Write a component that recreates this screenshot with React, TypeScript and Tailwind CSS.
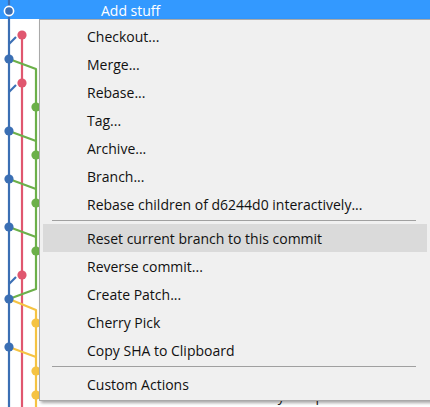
import React from "react";

const BLUE = "#3b6fb4";
const RED = "#e0576f";
const GREEN = "#6cb04a";
const YELLOW = "#f5c343";

function Graph() {
  const r = 4.6;
  return (
    <svg
      className="absolute left-0 top-0"
      width="40"
      height="407"
      viewBox="0 0 40 407"
      fill="none"
    >
      <line x1="9" y1="0" x2="9" y2="407" stroke={BLUE} strokeWidth="2.2" />
      <line x1="22" y1="35" x2="22" y2="407" stroke={RED} strokeWidth="2.2" />
      <polyline
        points="9,59 36,69 36,289 9,299"
        stroke={GREEN}
        strokeWidth="2.2"
        strokeLinejoin="round"
      />
      <line x1="9" y1="131" x2="36" y2="141" stroke={GREEN} strokeWidth="2.2" />
      <line x1="9" y1="179" x2="36" y2="189" stroke={GREEN} strokeWidth="2.2" />
      <line x1="9" y1="227" x2="36" y2="237" stroke={GREEN} strokeWidth="2.2" />
      <polyline
        points="9,299 36,310 36,407"
        stroke={YELLOW}
        strokeWidth="2.2"
        strokeLinejoin="round"
      />
      <line x1="9" y1="347" x2="36" y2="357" stroke={YELLOW} strokeWidth="2.2" />
      <line x1="9" y1="44" x2="16" y2="37" stroke={BLUE} strokeWidth="2.2" />
      <line x1="9" y1="92" x2="16" y2="85" stroke={BLUE} strokeWidth="2.2" />
      <line x1="9" y1="284" x2="16" y2="277" stroke={BLUE} strokeWidth="2.2" />
      <circle cx="9" cy="11" r="4.6" fill={BLUE} stroke="#ffffff" strokeWidth="1.6" />
      <circle cx="22" cy="35" r={r} fill={RED} />
      <circle cx="22" cy="83" r={r} fill={RED} />
      <circle cx="22" cy="275" r={r} fill={RED} />
      {[59, 131, 179, 227, 299, 347].map((y) => (
        <circle key={"b" + y} cx="9" cy={y} r={r} fill={BLUE} />
      ))}
      {[107, 155, 203, 251].map((y) => (
        <circle key={"g" + y} cx="36" cy={y} r={r} fill={GREEN} />
      ))}
      {[323, 371, 395].map((y) => (
        <circle key={"y" + y} cx="36" cy={y} r={r} fill={YELLOW} />
      ))}
    </svg>
  );
}

type Entry = { label: string } | { sep: true };

const entries: Entry[] = [
  { label: "Checkout..." },
  { label: "Merge..." },
  { label: "Rebase..." },
  { label: "Tag..." },
  { label: "Archive..." },
  { label: "Branch..." },
  { label: "Rebase children of d6244d0 interactively..." },
  { sep: true },
  { label: "Reset current branch to this commit" },
  { label: "Reverse commit..." },
  { label: "Create Patch..." },
  { label: "Cherry Pick" },
  { label: "Copy SHA to Clipboard" },
  { sep: true },
  { label: "Custom Actions" },
];

function Menu() {
  return (
    <div className="absolute left-[39px] top-[19px] w-[392px] h-[382px] bg-[#f0f0f0] border border-[#a9a9a9] shadow-[2px_2px_3px_rgba(0,0,0,0.35)] py-[2px] flex flex-col">
      {entries.map((e, i) =>
        "sep" in e ? (
          <div key={i} className="h-[6px] pt-[2px] pl-[12px] pr-[14px]">
            <div className="h-px bg-[#a0a0a0]" />
          </div>
        ) : (
          <div
            key={i}
            className={
              e.label === "Reset current branch to this commit"
                ? "h-[28px] mx-[3px] pl-[44px] flex items-center bg-[#dadada] text-[#111] whitespace-nowrap"
                : "h-[28px] mx-[3px] pl-[44px] flex items-center text-[#111] whitespace-nowrap"
            }
          >
            {e.label}
          </div>
        )
      )}
    </div>
  );
}

export default function App() {
  return (
    <div
      className="relative w-[430px] h-[407px] overflow-hidden bg-white text-[14px]"
      style={{ fontFamily: '"Segoe UI", "Open Sans", "Noto Sans", sans-serif' }}
    >
      <div className="flex flex-col">
        <div className="h-[19px] bg-[#3399ff] text-white pl-[101px] flex items-center pt-[2px] whitespace-nowrap">
          Add stuff
        </div>
        <div className="h-[364px]" />
        <div className="h-[24px] pl-[258px] flex items-center text-[#222] whitespace-nowrap">
          Tidy all up
        </div>
      </div>
      <Graph />
      <Menu />
    </div>
  );
}
